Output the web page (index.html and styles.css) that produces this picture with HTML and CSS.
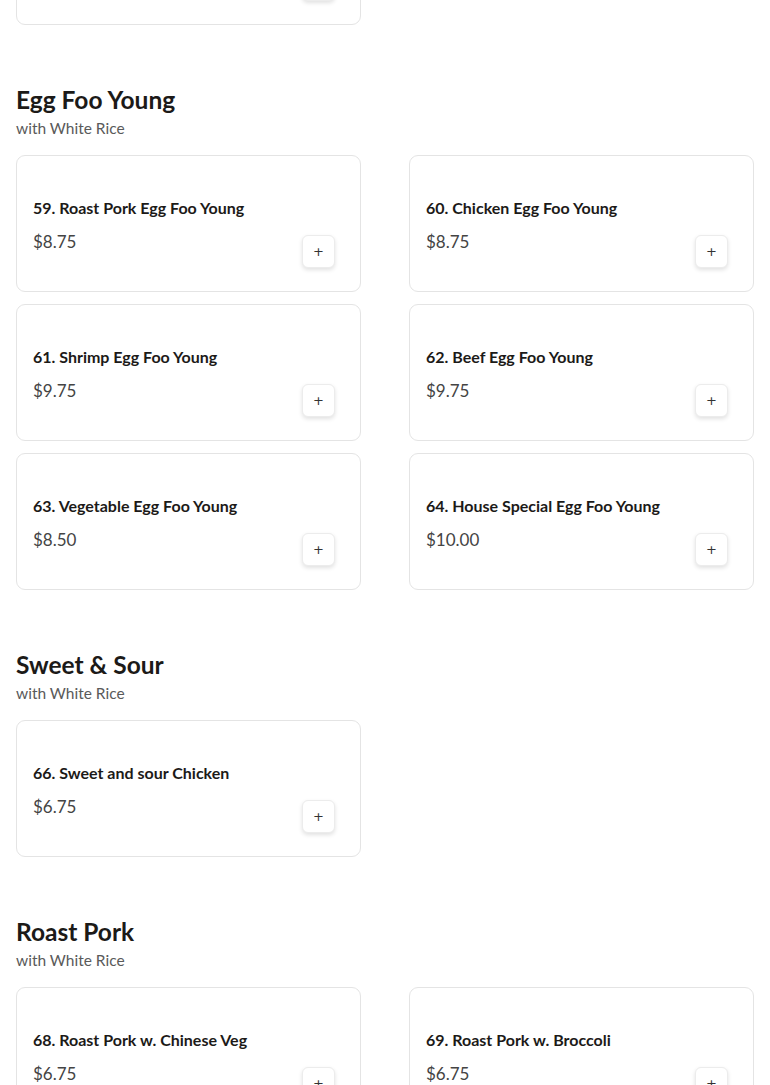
FILE: index.html
```html
<!DOCTYPE html>
<html lang="en">
<head>
<meta charset="utf-8">
<title>Menu</title>
<link rel="stylesheet" href="styles.css">
</head>
<body>
<main class="menu">
  <section class="section section-prev">
    <div class="grid">
      <div class="card">
        <div class="info"></div>
        <button class="add" type="button" aria-label="Add item"></button>
      </div>
    </div>
  </section>

  <section class="section">
    <h2 class="title">Egg Foo Young</h2>
    <p class="subtitle">with White Rice</p>
    <div class="grid">
      <div class="card">
        <div class="info"><div class="name">59. Roast Pork Egg Foo Young</div><div class="price">$8.75</div></div>
        <button class="add" type="button">+</button>
      </div>
      <div class="card">
        <div class="info"><div class="name">60. Chicken Egg Foo Young</div><div class="price">$8.75</div></div>
        <button class="add" type="button">+</button>
      </div>
      <div class="card">
        <div class="info"><div class="name">61. Shrimp Egg Foo Young</div><div class="price">$9.75</div></div>
        <button class="add" type="button">+</button>
      </div>
      <div class="card">
        <div class="info"><div class="name">62. Beef Egg Foo Young</div><div class="price">$9.75</div></div>
        <button class="add" type="button">+</button>
      </div>
      <div class="card">
        <div class="info"><div class="name">63. Vegetable Egg Foo Young</div><div class="price">$8.50</div></div>
        <button class="add" type="button">+</button>
      </div>
      <div class="card">
        <div class="info"><div class="name">64. House Special Egg Foo Young</div><div class="price">$10.00</div></div>
        <button class="add" type="button">+</button>
      </div>
    </div>
  </section>

  <section class="section">
    <h2 class="title">Sweet &amp; Sour</h2>
    <p class="subtitle">with White Rice</p>
    <div class="grid">
      <div class="card">
        <div class="info"><div class="name">66. Sweet and sour Chicken</div><div class="price">$6.75</div></div>
        <button class="add" type="button">+</button>
      </div>
    </div>
  </section>

  <section class="section">
    <h2 class="title">Roast Pork</h2>
    <p class="subtitle">with White Rice</p>
    <div class="grid">
      <div class="card">
        <div class="info"><div class="name">68. Roast Pork w. Chinese Veg</div><div class="price">$6.75</div></div>
        <button class="add" type="button">+</button>
      </div>
      <div class="card">
        <div class="info"><div class="name">69. Roast Pork w. Broccoli</div><div class="price">$6.75</div></div>
        <button class="add" type="button">+</button>
      </div>
    </div>
  </section>
</main>
</body>
</html>
```
FILE: styles.css
```css
html, body {
  margin: 0;
  padding: 0;
  background: #ffffff;
}

body {
  font-family: "Lato", "Liberation Sans", sans-serif;
  color: #1c1c1c;
  overflow: hidden;
}

.menu {
  padding: 0 16px;
  margin-top: -112px;
  display: flex;
  flex-direction: column;
  gap: 59px;
}

.title {
  margin: 0;
  font-size: 24.5px;
  line-height: 32px;
  font-weight: 700;
  color: #1c1a18;
}

.subtitle {
  margin: 2px 0 17px;
  font-size: 15.5px;
  line-height: 20px;
  color: #5a5a5a;
}

.grid {
  display: grid;
  grid-template-columns: 345px 345px;
  column-gap: 48px;
  row-gap: 12px;
}

.card {
  box-sizing: border-box;
  height: 137px;
  border: 1px solid #e4e4e4;
  border-radius: 9px;
  padding: 41px 25px 23px 16px;
  display: flex;
  justify-content: space-between;
  align-items: flex-end;
  background: #fff;
}

.info {
  display: flex;
  flex-direction: column;
  gap: 14px;
  padding-bottom: 16px;
}

.name {
  font-size: 16px;
  line-height: 20px;
  font-weight: 700;
  color: #1c1a18;
}

.price {
  font-size: 17px;
  line-height: 20px;
  color: #444;
}

.add {
  width: 33px;
  height: 33px;
  border: 1px solid #ececec;
  border-radius: 6px;
  background: #fff;
  box-shadow: 0 2px 4px rgba(0, 0, 0, 0.12);
  font-family: "DejaVu Sans", sans-serif;
  font-size: 13px;
  line-height: 1;
  color: #333;
  padding: 0;
  display: flex;
  align-items: center;
  justify-content: center;
}
```
